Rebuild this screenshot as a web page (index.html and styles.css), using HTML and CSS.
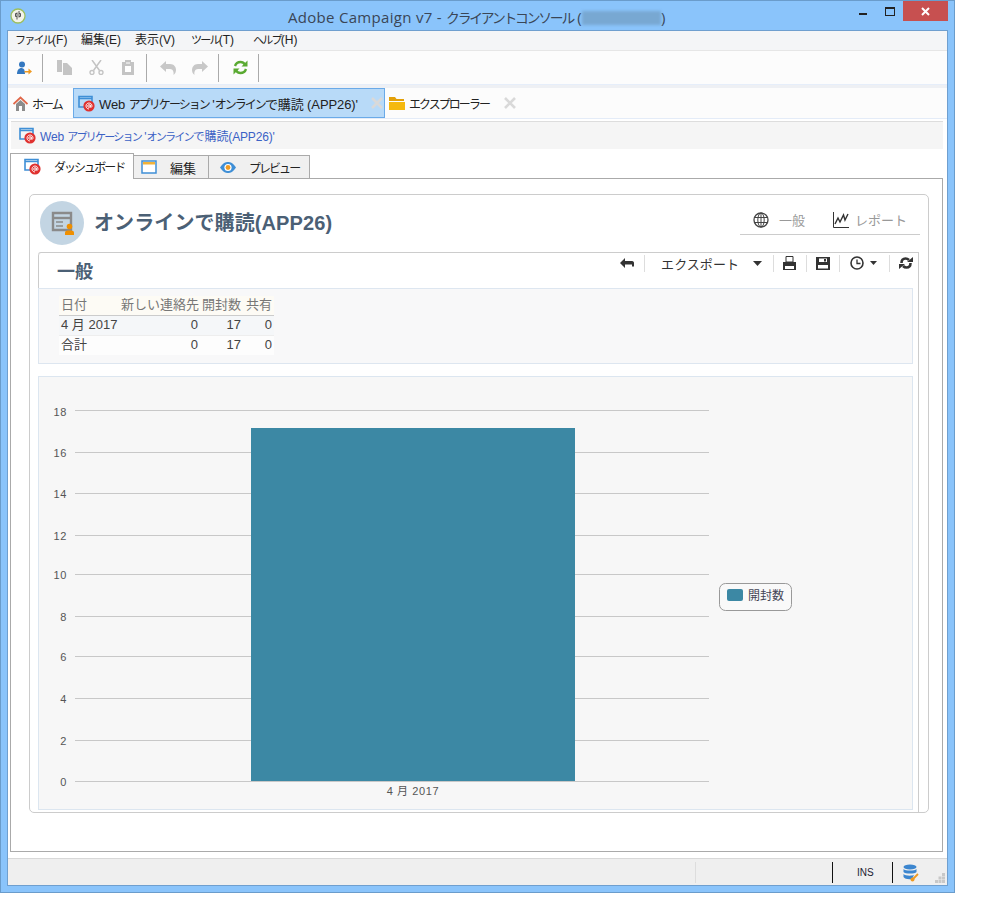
FILE: index.html
```html
<!DOCTYPE html>
<html lang="ja">
<head>
<meta charset="utf-8">
<title>Adobe Campaign v7</title>
<link rel="stylesheet" href="styles.css">
</head>
<body>
<svg class="defs" width="0" height="0">
  <symbol id="web" viewBox="0 0 17 17">
    <path d="M1 3.500V1.500H14V10M1 3.500H14M1 3.500V12H6" fill="none" stroke="#3f8fd6" stroke-width="1.600"/>
    <circle cx="11" cy="11" r="5.600" fill="#e0312f"/>
    <circle cx="11" cy="11" r="1.300" fill="none" stroke="#fff" stroke-width=".9"/>
    <path d="M12.300 9.700V12.200C13.600 12.800 14 11.600 14 11C14 9.300 12.700 8 11 8C9.300 8 8 9.300 8 11C8 12.700 9.300 14 11 14" fill="none" stroke="#fff" stroke-width=".9"/>
  </symbol>
  <symbol id="close" viewBox="0 0 14 14">
    <path d="M2 2L12 12M12 2L2 12" stroke="#d9d9d9" stroke-width="2.600" fill="none"/>
  </symbol>
  <symbol id="caret" viewBox="0 0 9 5">
    <path d="M0 0H9L4.500 5Z" fill="#333"/>
  </symbol>
</svg>

<div class="window">
  <header class="titlebar">
    <svg class="app-icon" width="16" height="16" viewBox="0 0 16 16">
      <circle cx="8" cy="8" r="7" fill="#f3f3ea" stroke="#9cbf5e" stroke-width="1.300"/>
      <path d="M7 4.500V11.500M9 3V9.500M7 8.500H5.500V5.500H7M9 8.500H10.500V5.500H9" fill="none" stroke="#555" stroke-width="1"/>
    </svg>
    <div class="window-title">Adobe Campaign v7 - <span class="k">クライアントコンソール</span> (<span class="blurred"></span>)</div>
    <div class="window-controls">
      <span class="ctl-min"></span>
      <span class="ctl-max"></span>
      <span class="ctl-close">
        <svg width="9" height="9" viewBox="0 0 9 9"><path d="M1 1L8 8M8 1L1 8" stroke="#fff" stroke-width="2" fill="none"/></svg>
      </span>
    </div>
  </header>

  <div class="client">
    <nav class="menubar">
      <span><span class="k">ファイル</span>(F)</span><span>編集(E)</span><span>表示(V)</span><span><span class="k">ツール</span>(T)</span><span><span class="k">ヘルプ</span>(H)</span>
    </nav>

    <div class="toolbar">
      <svg class="tool t-user" width="15" height="14" viewBox="0 0 15 14">
        <circle cx="5" cy="3.500" r="3" fill="#3478c0"/>
        <path d="M0 13C0 9 2 7 4.500 7C7 7 8 9 8 13Z" fill="#3478c0"/>
        <path d="M7.500 10H11.500V7.500L15 10.500L11.500 13.500V11.500H7.500Z" fill="#ef9a22"/>
      </svg>
      <i class="tsep s1"></i>
      <svg class="tool t-copy" width="15" height="15" viewBox="0 0 15 15">
        <path d="M0 0H5V12H0Z" fill="#c4c4c4"/>
        <path d="M6 3H10L15 8V15H6Z" fill="#c4c4c4"/>
      </svg>
      <svg class="tool t-cut" width="15" height="15" viewBox="0 0 15 15">
        <path d="M3 0L10.500 10.500M12 0L4.500 10.500" stroke="#c4c4c4" stroke-width="1.500" fill="none"/>
        <circle cx="3" cy="12.500" r="2" fill="none" stroke="#c4c4c4" stroke-width="1.400"/>
        <circle cx="12" cy="12.500" r="2" fill="none" stroke="#c4c4c4" stroke-width="1.400"/>
      </svg>
      <svg class="tool t-paste" width="12" height="15" viewBox="0 0 12 15">
        <path d="M0 2H3V0H9V2H12V15H0Z" fill="#c4c4c4"/>
        <path d="M3 6H9V12H3Z" fill="#fff"/>
        <path d="M4 3H8" stroke="#fff"/>
      </svg>
      <i class="tsep s2"></i>
      <svg class="tool t-undo" width="16" height="14" viewBox="0 0 16 14">
        <path d="M6 0V3H10C14 3 16 6 16 9C16 11 15 13 13.500 14C14 11 13 8 10 8H6V11L0 5.500Z" fill="#c8c8c8"/>
      </svg>
      <svg class="tool t-redo" width="16" height="14" viewBox="0 0 16 14">
        <path d="M10 0V3H6C2 3 0 6 0 9C0 11 1 13 2.500 14C2 11 3 8 6 8H10V11L16 5.500Z" fill="#c8c8c8"/>
      </svg>
      <i class="tsep s3"></i>
      <svg class="tool t-sync" width="15" height="15" viewBox="0 0 15 15">
        <path d="M2 6C3 3 5 2 7.500 2C9.500 2 11 3 12 4.500" fill="none" stroke="#5aaa32" stroke-width="2.400"/>
        <path d="M14.500 0.500V6.500H8.500Z" fill="#5aaa32"/>
        <path d="M13 9C12 12 10 13 7.500 13C5.500 13 4 12 3 10.500" fill="none" stroke="#5aaa32" stroke-width="2.400"/>
        <path d="M0.500 14.500V8.500H6.500Z" fill="#5aaa32"/>
      </svg>
      <i class="tsep s4"></i>
    </div>
    <div class="strip"></div>

    <div class="doc-tabs">
      <div class="doc-tab home">
        <svg width="15" height="15" viewBox="0 0 15 15">
          <path d="M3 8V15H6V10H9V15H12V8L7.500 4Z" fill="#8c8c8c"/>
          <path d="M0.500 8L7.500 1.500L14.500 8" fill="none" stroke="#e0684a" stroke-width="1.800"/>
        </svg>
        <span class="k">ホーム</span>
      </div>
      <div class="doc-tab active">
        <svg width="17" height="17"><use href="#web"/></svg>
        <span class="tab-text">Web <span class="k">アプリケーション</span> '<span class="k">オンライン</span>で購読 (APP26)'</span>
        <svg class="tab-x" width="14" height="14"><use href="#close"/></svg>
      </div>
      <div class="doc-tab explorer">
        <svg width="16" height="14" viewBox="0 0 16 14">
          <path d="M0 1H6L7.500 3H15V5H0Z" fill="#e3a008"/>
          <path d="M0 6H16V14H0Z" fill="#f5b90f"/>
        </svg>
        <span class="k">エクスプローラー</span>
        <svg class="tab-x2" width="14" height="14"><use href="#close"/></svg>
      </div>
    </div>

    <main class="content">
      <div class="breadcrumb">
        <svg width="17" height="17"><use href="#web"/></svg>
        <span class="crumb">Web <span class="k">アプリケーション</span> '<span class="k">オンライン</span>で購読(APP26)'</span>
      </div>

      <div class="view-tabs">
        <div class="view-tab current">
          <svg width="17" height="17"><use href="#web"/></svg>
          <span class="k">ダッシュボード</span>
        </div>
        <div class="view-tab edit">
          <svg width="16" height="14" viewBox="0 0 16 14">
            <rect x="1" y="1" width="14" height="12" fill="#fff" stroke="#3f8fd6" stroke-width="1.500"/>
            <rect x="2" y="2" width="12" height="2.500" fill="#f0b23a"/>
          </svg>
          <span>編集</span>
        </div>
        <div class="view-tab preview">
          <svg width="16" height="11" viewBox="0 0 16 11">
            <path d="M0 5.500C3 1 5.500 0 8 0C10.500 0 13 1 16 5.500C13 10 10.500 11 8 11C5.500 11 3 10 0 5.500Z" fill="#3f8fd6"/>
            <circle cx="8" cy="5.500" r="3.600" fill="#fff"/>
            <circle cx="8" cy="5.500" r="2.400" fill="#ef9a22"/>
          </svg>
          <span class="k">プレビュー</span>
        </div>
      </div>

      <section class="panel">
        <div class="card">
          <div class="card-head">
            <div class="badge">
              <svg width="24" height="24" viewBox="0 0 24 24">
                <path d="M3 2H21V19H3Z" fill="none" stroke="#8a8a8a" stroke-width="2.400"/>
                <path d="M3 7H21" fill="none" stroke="#8a8a8a" stroke-width="2.400"/>
                <path d="M6 11H13M6 15H13" fill="none" stroke="#8a8a8a" stroke-width="1.600"/>
                <circle cx="19.500" cy="15.500" r="2.800" fill="#ef8f00"/>
                <path d="M15 24V21.500C15 20 16.500 19.500 19.500 19.500C22.500 19.500 24 20 24 21.500V24Z" fill="#ef8f00"/>
              </svg>
            </div>
            <h1 class="card-title">オンラインで購読(APP26)</h1>
            <div class="card-nav">
              <svg class="nav-globe" width="16" height="16" viewBox="0 0 16 16">
                <circle cx="8" cy="8" r="7" fill="none" stroke="#444" stroke-width="1.300"/>
                <ellipse cx="8" cy="8" rx="3.200" ry="7" fill="none" stroke="#444"/>
                <path d="M1 5.500H15M1 10.500H15M8 1V15" stroke="#444" fill="none"/>
              </svg>
              <span class="nav-a">一般</span>
              <svg class="nav-chart" width="16" height="16" viewBox="0 0 16 16">
                <path d="M0.500 0V15.500H16" fill="none" stroke="#333"/>
                <path d="M2 12L5 6L7 10L10.500 3L12 8L15 2" fill="none" stroke="#333" stroke-width="1.400"/>
              </svg>
              <span class="nav-b">レポート</span>
            </div>
          </div>

          <div class="report">
            <div class="report-head">
              <h2 class="report-title">一般</h2>
              <div class="report-tools">
                <svg class="rt-back" width="14" height="10" viewBox="0 0 14 10">
                  <path d="M5 0V3H12C13.500 3 14 4 14 5V8.500H12V6.500H5V10L0 5Z" fill="#333"/>
                </svg>
                <i class="rsep r1"></i>
                <span class="rt-export">エクスポート</span>
                <svg class="rt-caret1" width="9" height="5"><use href="#caret"/></svg>
                <i class="rsep r2"></i>
                <svg class="rt-print" width="13" height="14" viewBox="0 0 13 14">
                  <path d="M3 .5H10V6H3Z" fill="none" stroke="#333"/>
                  <path d="M0 6H13V14H0Z" fill="#333"/>
                  <path d="M2 10H11V13H2Z" fill="#fff"/>
                </svg>
                <i class="rsep r3"></i>
                <svg class="rt-save" width="14" height="13" viewBox="0 0 14 13">
                  <path d="M0 0H14V13H0Z" fill="#333"/>
                  <path d="M3 1.500H11V5H3ZM2 8H12V11.500H2Z" fill="#fff"/>
                  <path d="M8 2H10V4.500H8Z" fill="#333"/>
                </svg>
                <i class="rsep r4"></i>
                <svg class="rt-clock" width="14" height="14" viewBox="0 0 14 14">
                  <circle cx="7" cy="7" r="6" fill="none" stroke="#333" stroke-width="1.600"/>
                  <path d="M7 3.500V7.500H10.500" fill="none" stroke="#333" stroke-width="1.300"/>
                </svg>
                <svg class="rt-caret2" width="7" height="4"><use href="#caret"/></svg>
                <i class="rsep r5"></i>
                <svg class="rt-refresh" width="14" height="12" viewBox="0 0 14 12">
                  <path d="M2.500 6C2.500 3 4 1.500 6.500 1.500C8 1.500 9 2 10 3M11.500 6C11.500 9 10 10.500 7.500 10.500C6 10.500 5 10 4 9" fill="none" stroke="#333" stroke-width="2.600"/>
                  <path d="M8 5H14V0ZM6 7H0V12Z" fill="#333"/>
                </svg>
              </div>
            </div>

            <div class="summary">
              <table class="stats">
                <thead>
                  <tr><th class="c-date">日付</th><th class="c-new">新しい連絡先</th><th class="c-open">開封数</th><th class="c-share">共有</th></tr>
                </thead>
                <tbody>
                  <tr class="odd"><td class="c-date">4 月 2017</td><td class="num">0</td><td class="num">17</td><td class="num">0</td></tr>
                  <tr class="even"><td class="c-date">合計</td><td class="num">0</td><td class="num">17</td><td class="num">0</td></tr>
                </tbody>
              </table>
            </div>

            <div class="chart">
              <svg class="chart-svg" width="873" height="432" viewBox="39 377 873 432">
                <g class="grid">
                  <path d="M75 410.500H709"/><path d="M75 452.500H709"/><path d="M75 493.500H709"/><path d="M75 535.500H709"/><path d="M75 574.500H709"/>
                  <path d="M75 616.500H709"/><path d="M75 656.500H709"/><path d="M75 698.500H709"/><path d="M75 740.500H709"/><path d="M75 781.500H709"/>
                </g>
                <rect x="251" y="428" width="324" height="353" fill="#3c88a4"/>
                <g class="ticks">
                  <text x="67" y="416">18</text><text x="67" y="457">16</text><text x="67" y="498">14</text><text x="67" y="540">12</text><text x="67" y="579">10</text>
                  <text x="67" y="621">8</text><text x="67" y="661">6</text><text x="67" y="703">4</text><text x="67" y="745">2</text><text x="67" y="786">0</text>
                </g>
                <text class="xlabel" x="413" y="795">4 月 2017</text>
                <rect x="719.500" y="583.500" width="72" height="27" rx="6" fill="#f9f9f9" stroke="#999"/>
                <rect x="727" y="589" width="16" height="12" rx="2" fill="#3c88a4"/>
                <text class="legend" x="748" y="600">開封数</text>
              </svg>
            </div>
          </div>
        </div>
      </section>
    </main>

    <footer class="statusbar">
      <div class="st-empty"></div>
      <div class="st-light"></div>
      <div class="st-ins">INS</div>
      <div class="st-db">
        <svg width="16" height="18" viewBox="0 0 16 18">
          <ellipse cx="7" cy="3" rx="6.500" ry="2.500" fill="#3c86cf"/>
          <path d="M.5 5C2 7 12 7 13.500 5V8C12 10 2 10 .5 8Z" fill="#3c86cf"/>
          <path d="M.5 10C2 12 9 12 11 11L9 15C5 15.500 2 15 .5 13Z" fill="#3c86cf"/>
          <path d="M9 16L15 10" stroke="#ef9a22" stroke-width="1.800" fill="none"/>
          <circle cx="9.500" cy="15.500" r="2" fill="#ef9a22"/>
        </svg>
      </div>
      <svg class="grip" width="10" height="10" viewBox="0 0 10 10">
        <path d="M7 0H10V3H7ZM3.500 3.500H6.500V6.500H3.500ZM7 3.500H10V6.500H7ZM0 7H3V10H0ZM3.500 7H6.500V10H3.500ZM7 7H10V10H7Z" fill="#c8c8c8"/>
      </svg>
    </footer>
  </div>
</div>
</body>
</html>
```

FILE: styles.css
```css
* { box-sizing: border-box; }
html, body { margin: 0; padding: 0; background: #fff; }
body {
  font-family: "Liberation Sans", "Noto Sans CJK JP", sans-serif;
  font-size: 12px;
  color: #333;
}
.defs { position: absolute; }
svg { display: block; flex: none; }
i { display: block; flex: none; }
.k { font-size: .92em; letter-spacing: -.16em; }

.window {
  width: 955px;
  height: 893px;
  background: #8ac4fb;
  border: 1px solid #6a9ccb;
  padding: 0 6px 6px;
  display: flex;
  flex-direction: column;
}

/* title bar */
.titlebar { height: 29px; flex: none; display: flex; align-items: flex-start; }
.app-icon { margin: 7px 0 0 3px; }
.window-title {
  margin-left: 262px;
  margin-top: 7px;
  font-family: "Open Sans", "Noto Sans CJK JP", sans-serif;
  font-size: 15px;
  line-height: 18px;
  color: #3a4656;
  white-space: nowrap;
  letter-spacing: .3px;
}
.blurred {
  display: inline-block;
  vertical-align: -2px;
  width: 79px;
  height: 14px;
  background: #78a8d2;
  filter: blur(1.500px);
}
.window-controls { margin-left: auto; display: flex; align-items: flex-start; }
.ctl-min { width: 8px; height: 2px; background: #222; margin: 12px 18px 0 0; }
.ctl-max { width: 10px; height: 9px; border: 1px solid #222; border-top-width: 2px; margin: 6px 8px 0 0; }
.ctl-close {
  width: 45px;
  height: 20px;
  background: #c75050;
  display: flex;
  align-items: center;
  justify-content: center;
}

/* client */
.client {
  flex: 1;
  min-height: 0;
  border: 1px solid #6f9fcf;
  background: #fff;
  display: flex;
  flex-direction: column;
}
.menubar {
  height: 20px;
  flex: none;
  background: #f4f5f7;
  border-bottom: 1px solid #e6e6e6;
  display: grid;
  grid-template-columns: 66px 54px 56px 62px auto;
  align-items: center;
  color: #222;
  padding-left: 7px;
}
.menubar > span { line-height: 19px; white-space: nowrap; }

.toolbar {
  height: 33px;
  flex: none;
  background: #fcfcfc;
  display: flex;
  align-items: center;
}
.t-user { margin-left: 9px; }
.tsep { width: 1px; height: 28px; background: #aaa; }
.s1 { margin-left: 10px; }
.t-copy { margin-left: 14px; }
.t-cut { margin-left: 17px; }
.t-paste { margin-left: 18px; }
.s2 { margin-left: 12px; }
.t-undo { margin-left: 13px; }
.t-redo { margin-left: 16px; }
.s3 { margin-left: 10px; }
.t-sync { margin-left: 14px; }
.s4 { margin-left: 10px; }

.strip { height: 4px; flex: none; background: #eef0f4; border-top: 1px solid #e6eefa; }

.doc-tabs {
  height: 31px;
  flex: none;
  background: #fcfcfc;
  border-bottom: 1px solid #e4ecf8;
  display: flex;
  align-items: flex-start;
}
.doc-tab { display: flex; align-items: center; height: 30px; color: #222; white-space: nowrap; font-size: 13px; }
.home { padding-left: 5px; width: 65px; }
.home span { margin-left: 4px; }
.active {
  width: 312px;
  height: 30px;
  background: #b8daf8;
  border: 1px solid #6aaae8;
  padding-left: 4px;
}
.tab-text { margin-left: 4px; letter-spacing: -.1px; }
.tab-x { margin-left: auto; }
.explorer { padding-left: 4px; }
.explorer > span { margin-left: 4px; }
.tab-x2 { margin-left: 14px; }

/* content */
.content { flex: none; height: 739px; padding: 2px 3px 0 2px; display: flex; flex-direction: column; }
.breadcrumb {
  height: 28px;
  flex: none;
  margin: 0 1px;
  background: #f5f5f5;
  border-top: 1px solid #ddd;
  display: flex;
  align-items: center;
  padding: 0 0 1px 8px;
  color: #3b62c5;
}
.crumb { margin-left: 4px; white-space: nowrap; letter-spacing: -.15px; }

.view-tabs {
  height: 26px;
  flex: none;
  margin: 4px 0 -1px;
  display: flex;
  align-items: flex-end;
  position: relative;
  z-index: 1;
}
.view-tab {
  display: flex;
  align-items: center;
  height: 24px;
  background: #f0f0f0;
  border: 1px solid #aaa;
  border-left: 0;
  color: #222;
  font-size: 13px;
  white-space: nowrap;
}
.current {
  width: 124px;
  height: 26px;
  background: #fff;
  border-left: 1px solid #aaa;
  border-bottom: 0;
  padding-left: 13px;
}
.view-tab span { margin-left: 13px; }
.edit { width: 75px; padding-left: 7px; }
.preview { width: 101px; padding-left: 11px; }

.panel {
  flex: none;
  height: 674px;
  margin-right: 1px;
  border: 1px solid #aaa;
  padding: 15px 13px 0 18px;
  background: #fff;
}

.card {
  height: 619px;
  border: 1px solid #ccc;
  border-radius: 5px;
  display: flex;
  flex-direction: column;
}
.card-head { height: 57px; flex: none; display: flex; align-items: flex-start; padding: 6px 8px 0 10px; }
.badge {
  width: 44px;
  height: 44px;
  border-radius: 50%;
  background: #c3d5e3;
  display: flex;
  align-items: center;
  justify-content: center;
  flex: none;
}
.card-title {
  margin: 9px 0 0 10px;
  font-size: 20px;
  line-height: 26px;
  font-weight: bold;
  color: #4b6075;
  white-space: nowrap;
  letter-spacing: .1px;
}
.card-nav {
  margin: 4px 0 0 auto;
  width: 180px;
  height: 30px;
  border-bottom: 1px solid #ccc;
  display: flex;
  align-items: center;
  color: #999;
  font-size: 13px;
}
.nav-globe { margin-left: 13px; }
.nav-a { margin-left: 10px; }
.nav-chart { margin-left: 28px; }
.nav-b { margin-left: 6px; }

.report {
  flex: 1;
  min-height: 0;
  margin: 0 9px 0 8px;
  border-top: 1px solid #ccc;
  border-right: 1px solid #ccc;
  border-top-left-radius: 3px;
  padding-right: 5px;
  display: flex;
  flex-direction: column;
}
.report-head {
  height: 35px;
  flex: none;
  border-left: 1px solid #ccc;
  border-top-left-radius: 3px;
  display: flex;
  align-items: flex-start;
}
.report-title {
  margin: 7px 0 0 18px;
  font-size: 18px;
  line-height: 24px;
  font-weight: bold;
  color: #4b6075;
}
.report-tools {
  margin-left: auto;
  height: 20px;
  display: flex;
  align-items: center;
  color: #333;
  font-size: 13px;
}
.rsep { width: 1px; height: 17px; background: #ddd; }
.r1 { margin-left: 10px; }
.rt-export { margin-left: 16px; letter-spacing: .05px; }
.rt-caret1 { margin-left: 14px; }
.r2 { margin-left: 11px; }
.rt-print { margin-left: 9px; }
.r3 { margin-left: 10px; }
.rt-save { margin-left: 9px; }
.r4 { margin-left: 9px; }
.rt-clock { margin-left: 10px; }
.rt-caret2 { margin-left: 6px; }
.r5 { margin-left: 12px; }
.rt-refresh { margin-left: 9px; }

.summary {
  height: 76px;
  flex: none;
  background: #f8f8f9;
  border: 1px solid #dde6f0;
  padding: 7px 0 0 20px;
}
.stats { border-collapse: collapse; table-layout: fixed; width: 215px; font-size: 13px; }
.stats th, .stats td { padding: 0 2px; height: 20px; line-height: 18px; white-space: nowrap; }
.stats .c-date { text-align: left; }
.stats th {
  height: 19px;
  background: #fdfbf5;
  border-bottom: 1px solid #ccc;
  color: #777;
  font-weight: normal;
  text-align: right;
}
.stats th.c-date { width: 60px; text-align: left; }
.stats .c-new { width: 81px; }
.stats .c-open { width: 43px; }
.stats .c-share { width: 31px; }
.stats td { color: #444; }
.stats .num { text-align: right; }
.odd td { background: #f5f7f9; border-bottom: 1px solid #eee; }
.even td { background: #fdfdfd; }

.chart {
  height: 434px;
  flex: none;
  margin-top: 12px;
  background: #f7f7f7;
  border: 1px solid #dce6f0;
}
.grid path { stroke: #c8c8c8; stroke-width: 1; fill: none; }
.ticks text { font-size: 11px; fill: #555; text-anchor: end; letter-spacing: .6px; }
.xlabel { font-size: 11px; fill: #555; text-anchor: middle; letter-spacing: .6px; }
.legend { font-size: 12px; fill: #445; }

/* status bar */
.statusbar {
  flex: 1;
  min-height: 0;
  background: #efefef;
  border-top: 1px solid #d8d8d8;
  display: flex;
  align-items: center;
}
.st-empty { width: 687px; }
.st-light { width: 137px; height: 21px; border-left: 1px solid #ddd; }
.st-ins {
  width: 60px;
  height: 21px;
  border-left: 1px solid #111;
  font-size: 10px;
  line-height: 21px;
  padding-left: 24px;
  color: #223;
}
.st-db { height: 21px; border-left: 1px solid #111; padding: 2px 0 0 10px; width: 43px; }
.grip { margin: 12px 0 0 0; }
```
